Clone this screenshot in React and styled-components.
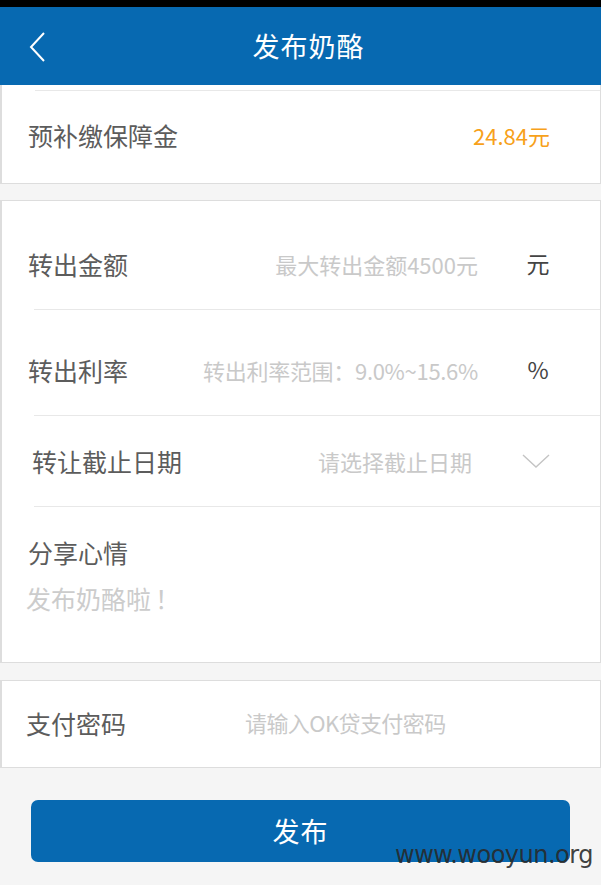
import React from "react";
import styled, { createGlobalStyle } from "styled-components";

const GlobalStyle = createGlobalStyle`
  html, body {
    margin: 0;
    padding: 0;
    background: #f5f5f5;
  }
  body {
    font-family: "Noto Sans CJK SC", "Noto Sans", Roboto, sans-serif;
  }
`;

const Page = styled.div`
  position: relative;
  width: 601px;
  height: 885px;
  overflow: hidden;
  background: #f5f5f5;
  display: flex;
  flex-direction: column;
`;

const StatusBar = styled.div`
  height: 7px;
  background: #000;
`;

const Header = styled.header`
  position: relative;
  height: 78px;
  background: #0769b1;
  display: flex;
  align-items: center;
  justify-content: center;
  color: #fff;
  font-size: 27px;
  letter-spacing: 1px;
  padding-left: 16px;
  padding-bottom: 2px;
  box-sizing: border-box;

  & > .back {
    position: absolute;
    left: 28px;
    top: 24px;
    display: flex;
  }
`;

const Card = styled.section`
  background: #fff;
  border: 1px solid #dddddd;
  border-left-width: 2px;
  border-top: ${(p) => (p.$noTop ? "none" : "1px solid #dddddd")};
  margin-top: ${(p) => p.$gap || 0}px;
`;

const Divider = styled.div`
  height: 1px;
  background: #e8e8e8;
  margin-left: ${(p) => p.$inset ?? 32}px;
`;

const Row = styled.div`
  display: flex;
  align-items: center;
  height: ${(p) => p.$h}px;
  padding-top: ${(p) => p.$pt || 0}px;
  padding-bottom: ${(p) => p.$pb || 0}px;
  box-sizing: border-box;
  padding-left: ${(p) => p.$pl ?? 26}px;
  padding-right: 50px;
  line-height: 1.2;
`;

const Label = styled.div`
  font-size: 25px;
  color: #5c5c5c;
  flex-shrink: 0;
`;

const Placeholder = styled.div`
  flex: 1;
  font-size: 22px;
  color: #c9c9c9;
  text-align: ${(p) => p.$align || "right"};
  padding-left: ${(p) => p.$pl || 0}px;
  padding-right: ${(p) => p.$pr || 0}px;
  letter-spacing: ${(p) => p.$ls || 0}px;
  white-space: nowrap;
`;

const Unit = styled.div`
  width: 24px;
  text-align: center;
  font-size: 23px;
  color: #444;
`;

const Value = styled.div`
  flex: 1;
  text-align: right;
  font-size: 22px;
  color: #f7a11a;
`;

const Mood = styled.div`
  height: 155px;
  padding: 25px 0 0 26px;
  box-sizing: border-box;

  & > .mood-label {
    font-size: 25px;
    color: #5c5c5c;
    line-height: 40px;
  }
  & > .mood-text {
    font-size: 25px;
    color: #cccccc;
    line-height: 40px;
    margin-top: 6px;
    margin-left: -2px;
  }
  & > .mood-text > .bang {
    margin-left: 4px;
  }
`;

const ButtonWrap = styled.div`
  padding: 32px 31px 0 31px;
`;

const Button = styled.button`
  width: 539px;
  height: 62px;
  border: none;
  border-radius: 7px;
  background: #0769b1;
  color: #fff;
  font-family: inherit;
  font-size: 27px;
  letter-spacing: 1px;
  padding: 0 0 2px 0;
`;

const Watermark = styled.div`
  position: absolute;
  left: 395px;
  top: 841px;
  font-family: "DejaVu Sans", sans-serif;
  font-size: 24px;
  color: rgba(40, 40, 40, 0.9);
  letter-spacing: -0.5px;
`;

function Chevron({ dir = "left", color, size, w = 2 }) {
  if (dir === "left") {
    return (
      <svg width="20" height="32" viewBox="0 0 20 32">
        <polyline points="16,2 3,16 16,30" fill="none" stroke={color} strokeWidth={w} />
      </svg>
    );
  }
  return (
    <svg width={size} height="16" viewBox="0 0 28 16">
      <polyline points="1,2 14,14 27,2" fill="none" stroke={color} strokeWidth={w} />
    </svg>
  );
}

export default function App() {
  return (
    <>
      <GlobalStyle />
      <Page>
        <StatusBar />
        <Header>
          <span className="back">
            <Chevron dir="left" color="#fff" />
          </span>
          发布奶酪
        </Header>

        <Card $noTop>
          <Divider $inset={33} style={{ marginTop: 5 }} />
          <Row $h={92} $pb={4}>
            <Label>预补缴保障金</Label>
            <Value>24.84元</Value>
          </Row>
        </Card>

        <Card $gap={16}>
          <Row $h={108} $pt={18}>
            <Label>转出金额</Label>
            <Placeholder $pr={48}>最大转出金额4500元</Placeholder>
            <Unit>元</Unit>
          </Row>
          <Divider />
          <Row $h={105} $pt={15}>
            <Label>转出利率</Label>
            <Placeholder $pr={48} $ls={-0.3}>转出利率范围：9.0%~15.6%</Placeholder>
            <Unit>%</Unit>
          </Row>
          <Divider />
          <Row $h={90} $pl={30}>
            <Label>转让截止日期</Label>
            <Placeholder $pr={50}>请选择截止日期</Placeholder>
            <Chevron dir="down" color="#c4c4c4" size={28} w={1.4} />
          </Row>
          <Divider />
          <Mood>
            <div className="mood-label">分享心情</div>
            <div className="mood-text">
              发布奶酪啦<span className="bang">！</span>
            </div>
          </Mood>
        </Card>

        <Card $gap={17}>
          <Row $h={86} $pl={24} $pb={3}>
            <Label>支付密码</Label>
            <Placeholder $align="left" $pl={119} $ls={-0.6}>请输入OK贷支付密码</Placeholder>
          </Row>
        </Card>

        <ButtonWrap>
          <Button>发布</Button>
        </ButtonWrap>

        <Watermark>www.wooyun.org</Watermark>
      </Page>
    </>
  );
}
